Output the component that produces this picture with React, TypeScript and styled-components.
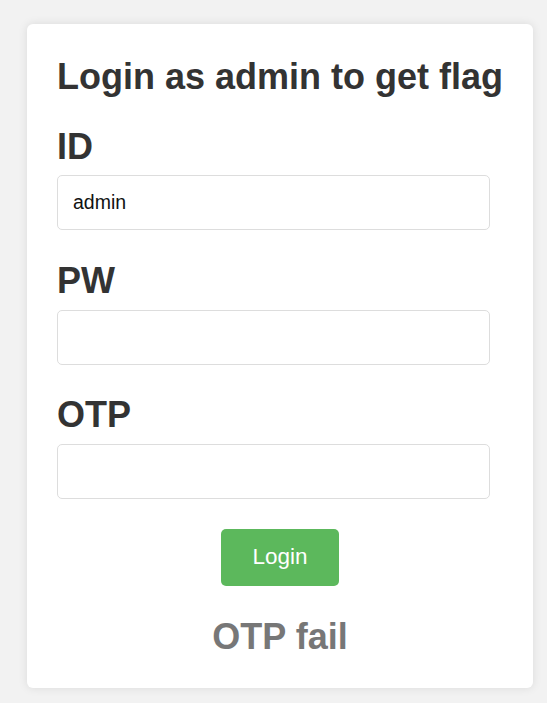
import React from "react";
import styled, { createGlobalStyle } from "styled-components";

const GlobalStyle = createGlobalStyle`
  html, body {
    margin: 0;
    padding: 0;
    background: #f2f2f2;
    font-family: "Liberation Sans", Arial, sans-serif;
  }
  * { box-sizing: border-box; }
`;

const Page = styled.div`
  padding: 24px 0 15px 27px;
  min-height: 703px;
`;

const Card = styled.div`
  width: 506px;
  background: #ffffff;
  border-radius: 6px;
  box-shadow: 0 0 10px rgba(0, 0, 0, 0.1);
  padding: 34.5px 30px 33.5px;
  display: flex;
  flex-direction: column;
`;

const Title = styled.h1`
  margin: 0;
  font-size: 36px;
  line-height: 36px;
  font-weight: bold;
  color: #333333;
  white-space: nowrap;
`;

const Form = styled.form`
  display: flex;
  flex-direction: column;
`;

const Label = styled.label<{ $first?: boolean }>`
  display: block;
  margin: ${(p) => (p.$first ? "34px" : "32.5px")} 0 10.75px;
  font-size: 36px;
  line-height: 36px;
  font-weight: bold;
  color: #333333;
`;

const Input = styled.input`
  display: block;
  width: 433px;
  height: 55px;
  margin: 0;
  padding: 0 15px;
  border: 1px solid #dddddd;
  border-radius: 5px;
  background: #ffffff;
  font-family: "Liberation Sans", Arial, sans-serif;
  font-size: 19.5px;
  color: #111111;
  outline: none;
`;

const Button = styled.button`
  align-self: center;
  margin-top: 30px;
  width: 118px;
  height: 57px;
  border: none;
  border-radius: 5px;
  background: #5cb85c;
  color: #ffffff;
  font-family: "Liberation Sans", Arial, sans-serif;
  font-size: 22.5px;
  cursor: pointer;
`;

const Status = styled.div`
  margin-top: 33px;
  text-align: center;
  font-size: 36px;
  line-height: 36px;
  font-weight: bold;
  color: #777777;
`;

export default function App() {
  return (
    <>
      <GlobalStyle />
      <Page>
        <Card>
          <Title>Login as admin to get flag</Title>
          <Form onSubmit={(e) => e.preventDefault()}>
            <Label $first htmlFor="id">ID</Label>
            <Input id="id" type="text" defaultValue="admin" />
            <Label htmlFor="pw">PW</Label>
            <Input id="pw" type="password" />
            <Label htmlFor="otp">OTP</Label>
            <Input id="otp" type="text" />
            <Button type="submit">Login</Button>
          </Form>
          <Status>OTP fail</Status>
        </Card>
      </Page>
    </>
  );
}
